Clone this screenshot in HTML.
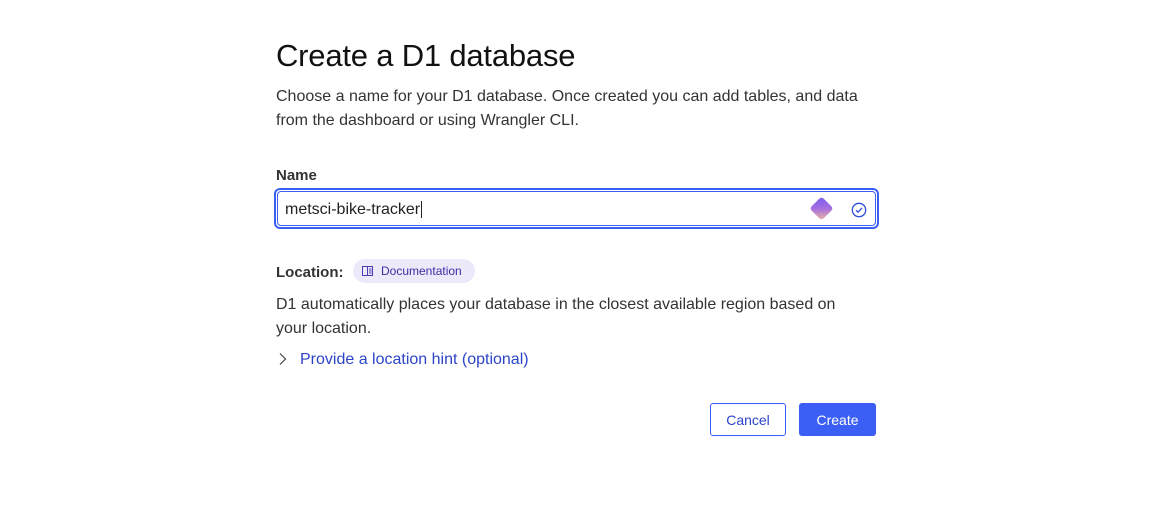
<!DOCTYPE html>
<html><head><style>
body{margin:0;width:1168px;height:513px;background:#fff;font-family:"Liberation Sans",sans-serif;color:#222;position:relative;overflow:hidden}
.a{position:absolute}
h1{position:absolute;left:276px;top:38px;margin:0;font-size:31px;font-weight:400;color:#111;letter-spacing:-0.2px}
p{margin:0}
.btn{position:absolute;top:403px;height:33px;box-sizing:border-box;border-radius:3px;font-size:14px;display:flex;align-items:center;justify-content:center}
</style></head><body>
<h1>Create a D1 database</h1>
<div class="a" style="left:276px;top:85px;font-size:16px;line-height:24px;color:#333">Choose a name for your D1 database. Once created you can add tables, and data<br>from the dashboard or using Wrangler CLI.</div>
<div class="a" style="left:276px;top:167px;font-size:15px;font-weight:bold;color:#333">Name</div>
<div class="a" style="left:274px;top:188px;width:605px;height:41px;box-sizing:border-box;border:2px solid #3b5ef5;border-radius:6px;padding:1px">
 <div style="height:100%;box-sizing:border-box;border:1px solid #3b5ef5;border-radius:4px;position:relative">
  <span class="a" style="left:7px;top:9px;font-size:16px;color:#222">metsci-bike-tracker<span style="border-left:1px solid #222;margin-left:1px"></span></span>
  <div class="a" style="left:535px;top:8px;width:17px;height:17px;transform:rotate(45deg);border-radius:3px;background:linear-gradient(135deg,#7a5cf0,#a66ee0 50%,#f0b9a0)"></div>
  <svg class="a" style="left:573px;top:10px" width="16" height="16" viewBox="0 0 16 16"><circle cx="8" cy="8" r="6.7" fill="none" stroke="#2f4fd8" stroke-width="1.3"/><path d="M5 8.2l2 2 4-4.2" fill="none" stroke="#2f4fd8" stroke-width="1.3"/></svg>
 </div>
</div>
<div class="a" style="left:276px;top:264px;font-size:15px;font-weight:bold;color:#333">Location:</div>
<div class="a" style="left:353px;top:259px;width:122px;height:24px;border-radius:12px;background:#ece9fb;font-size:12px;color:#3c2fa0;display:flex;align-items:center">
 <svg style="margin-left:9px;margin-right:8px" width="11" height="10" viewBox="0 0 11 10"><rect x="0.5" y="0.5" width="10" height="9" fill="none" stroke="#4a3cb5"/><path d="M5.5 0.5v9M7 3h2.5M7 5h2.5M7 7h2.5" stroke="#4a3cb5"/></svg>Documentation</div>
<div class="a" style="left:276px;top:293px;font-size:16px;line-height:24px;color:#333">D1 automatically places your database in the closest available region based on<br>your location.</div>
<svg class="a" style="left:278px;top:352px" width="10" height="14" viewBox="0 0 10 14"><path d="M2 1.5l5.5 5.5-5.5 5.5" fill="none" stroke="#444" stroke-width="1.2"/></svg>
<div class="a" style="left:300px;top:351px;font-size:16px;color:#2c44c8">Provide a location hint (optional)</div>
<div class="btn" style="left:710px;width:76px;border:1px solid #3b5ef5;color:#2c44c8;background:#fff">Cancel</div>
<div class="btn" style="left:799px;width:77px;background:#3b5ef5;color:#fff">Create</div>
</body></html>
